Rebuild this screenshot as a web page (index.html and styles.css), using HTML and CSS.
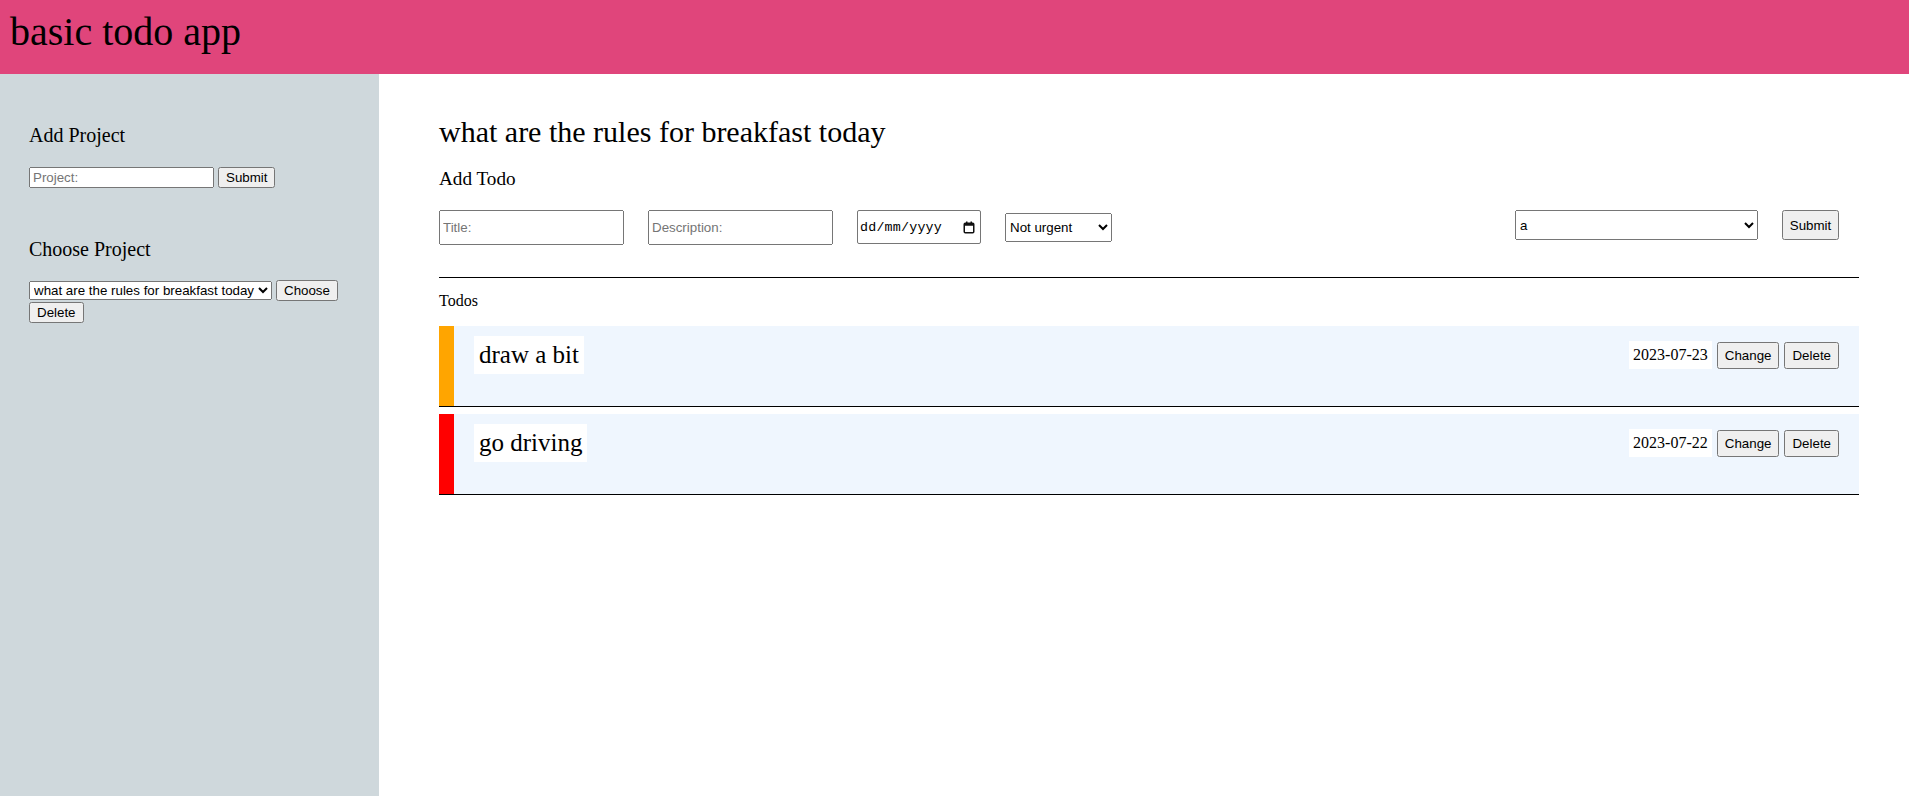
FILE: index.html
```html
<!DOCTYPE html>
<html lang="en-GB">
<head>
<meta charset="utf-8">
<title>basic todo app</title>
<link rel="stylesheet" href="styles.css">
</head>
<body>
<header class="app-header">
  <h1 class="app-title">basic todo app</h1>
</header>
<div class="layout">
  <aside class="sidebar">
    <h3 class="side-heading side-heading-first">Add Project</h3>
    <form class="side-form">
      <input class="side-input" type="text" placeholder="Project:"><button class="btn btn-side" type="button">Submit</button>
    </form>
    <h3 class="side-heading side-heading-second">Choose Project</h3>
    <form class="side-form">
      <select class="side-select"><option>what are the rules for breakfast today</option></select><button class="btn btn-side" type="button">Choose</button>
      <button class="btn btn-side-block" type="button">Delete</button>
    </form>
  </aside>
  <main class="main">
    <h1 class="project-title">what are the rules for breakfast today</h1>
    <h3 class="add-heading">Add Todo</h3>
    <form class="todo-form">
      <input class="field field-text" type="text" placeholder="Title:">
      <input class="field field-text" type="text" placeholder="Description:">
      <div class="field field-date" role="textbox" aria-label="Due date">
        <span class="date-text">dd/mm/yyyy</span>
        <svg class="date-icon" width="12" height="13" viewBox="0 0 12 13" aria-hidden="true">
          <rect x="1.25" y="2.25" width="9.5" height="9.5" rx="1" fill="none" stroke="#111" stroke-width="1.5"/>
          <rect x="1.25" y="2.25" width="9.5" height="2.5" fill="#111"/>
          <rect x="3" y="0.5" width="1.5" height="2.5" fill="#111"/>
          <rect x="7.5" y="0.5" width="1.5" height="2.5" fill="#111"/>
        </svg>
      </div>
      <select class="field field-priority"><option>Not urgent</option><option>Urgent</option></select>
      <select class="field field-project"><option>a</option></select>
      <button class="btn btn-submit" type="button">Submit</button>
    </form>
    <hr class="divider">
    <div class="todos-label">Todos</div>
    <div class="todo-list">
      <div class="todo">
        <div class="todo-strip strip-orange"></div>
        <span class="todo-title">draw a bit</span>
        <div class="todo-actions">
          <span class="todo-date">2023-07-23</span>
          <button class="btn btn-item" type="button">Change</button>
          <button class="btn btn-item" type="button">Delete</button>
        </div>
      </div>
      <div class="todo">
        <div class="todo-strip strip-red"></div>
        <span class="todo-title">go driving</span>
        <div class="todo-actions">
          <span class="todo-date">2023-07-22</span>
          <button class="btn btn-item" type="button">Change</button>
          <button class="btn btn-item" type="button">Delete</button>
        </div>
      </div>
    </div>
  </main>
</div>
</body>
</html>
```
FILE: styles.css
```css
html, body {
  margin: 0;
  padding: 0;
}
body {
  font-family: "Liberation Serif", "Times New Roman", serif;
  color: #000;
  background: #fff;
}
.app-header {
  background: #e0457b;
  height: 74px;
  box-sizing: border-box;
  padding: 9px 10px 0;
}
.app-title {
  margin: 0;
  font-size: 40px;
  font-weight: normal;
  line-height: 46px;
}
.layout {
  display: flex;
  min-height: calc(100vh - 74px);
}
.sidebar {
  width: 379px;
  flex: none;
  background: #cfd8dc;
  box-sizing: border-box;
  padding: 0 29px;
}
.side-heading {
  font-size: 20px;
  font-weight: normal;
  line-height: 23px;
  margin: 0;
}
.side-heading-first {
  margin-top: 50px;
  margin-bottom: 20px;
}
.side-heading-second {
  margin-top: 50px;
  margin-bottom: 19px;
}
.side-form {
  margin: 0;
  font-size: 0;
  line-height: 0;
}
.side-form > * {
  vertical-align: middle;
}
.btn-side {
  margin-left: 4px;
}
.btn-side-block {
  display: block;
  margin-top: 1px;
  font-family: "Liberation Sans", Arial, sans-serif;
  font-size: 13.33px;
}
.side-input {
  box-sizing: border-box;
  width: 185px;
  height: 21px;
  font-family: "Liberation Sans", Arial, sans-serif;
  font-size: 13.33px;
}
.side-select {
  font-family: "Liberation Sans", Arial, sans-serif;
  font-size: 13.33px;
  height: 19px;
}
.btn {
  font-family: "Liberation Sans", Arial, sans-serif;
  font-size: 13.33px;
}
.main {
  flex: 1;
  padding: 0 50px 0 60px;
}
.project-title {
  font-size: 30px;
  font-weight: normal;
  line-height: 35px;
  margin: 40px 0 0;
}
.add-heading {
  font-size: 19.2px;
  font-weight: normal;
  line-height: 22px;
  margin: 19px 0 0;
}
.todo-form {
  display: flex;
  align-items: flex-start;
  gap: 24px;
  margin-top: 20px;
  padding-right: 20px;
}
.field {
  box-sizing: border-box;
  font-family: "Liberation Sans", Arial, sans-serif;
  font-size: 13.33px;
  margin: 0;
}
.field-text {
  width: 185px;
  height: 35px;
}
.field-date {
  width: 124px;
  height: 34px;
  display: flex;
  align-items: center;
  justify-content: space-between;
  padding: 0 5px 0 2px;
  border: 1px solid #767676;
  border-radius: 2px;
  background: #fff;
  font-family: "Liberation Mono", monospace;
  color: #000;
}
.date-text {
  font-size: 13.33px;
  letter-spacing: 0.2px;
}
.date-icon {
  display: block;
}
.field-priority {
  width: 107px;
  height: 29px;
  margin-top: 3px;
}
.field-project {
  width: 243px;
  height: 30px;
  margin-left: auto;
}
.btn-submit {
  height: 30px;
  width: 57px;
  padding: 0;
}
.divider {
  border: 0;
  border-top: 1px solid #000;
  margin: 32px 0 0;
  height: 0;
}
.todos-label {
  font-size: 16px;
  line-height: 18px;
  margin-top: 14px;
}
.todo-list {
  display: flex;
  flex-direction: column;
  gap: 7px;
  margin-top: 16px;
}
.todo {
  display: flex;
  align-items: flex-start;
  height: 80px;
  background: #eff6fe;
  border-bottom: 1px solid #000;
}
.todo-strip {
  width: 15px;
  align-self: stretch;
  flex: none;
}
.strip-orange {
  background: #ffa500;
}
.strip-red {
  background: #ff0000;
}
.todo-title {
  background: #fff;
  font-size: 25px;
  line-height: 28px;
  padding: 5px;
  margin: 10px 0 0 20px;
}
.todo-actions {
  margin-left: auto;
  margin-top: 15px;
  margin-right: 20px;
  display: flex;
  align-items: center;
  gap: 5px;
}
.todo-date {
  background: #fff;
  font-size: 16px;
  line-height: 18px;
  padding: 5px 4px;
}
.btn-item {
  padding: 4px 6px;
}
```
